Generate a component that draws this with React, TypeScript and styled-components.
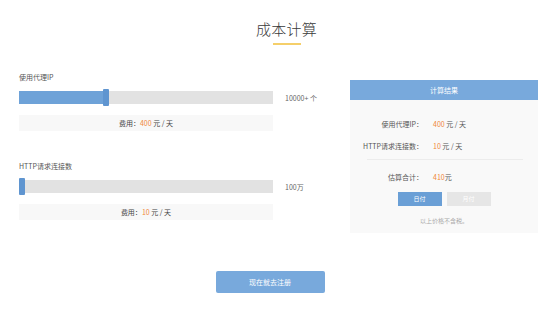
import { FC } from "react";
import styled, { createGlobalStyle } from "styled-components";

const GlobalStyle = createGlobalStyle`
  html, body {
    margin: 0;
    padding: 0;
    background: #ffffff;
    font-family: "Noto Sans CJK SC", "Liberation Sans", sans-serif;
    color: #666666;
  }
`;

const BLUE = "#78a9dc";
const ORANGE = "#f0883a";

interface SliderProps {
  label: string;
  percent: number;
  valueText: string;
  fee: string;
}

const SliderBlock: FC<SliderProps> = ({ label, percent, valueText, fee }) => (
  <Block>
    <Label>{label}</Label>
    <SliderRow>
      <Track>
        <Fill style={{ width: `${percent}%` }} />
        <Thumb style={{ left: `${percent}%` }} />
      </Track>
      <ValueText>{valueText}</ValueText>
    </SliderRow>
    <FeeBox>
      费用：<Orange>{fee}</Orange> 元 / 天
    </FeeBox>
  </Block>
);

export default function App() {
  return (
    <>
      <GlobalStyle />
      <Page>
        <TitleWrap>
          <Title>成本计算</Title>
          <Underline />
        </TitleWrap>
        <Content>
          <LeftCol>
            <SliderBlock
              label="使用代理IP"
              percent={33}
              valueText="10000+ 个"
              fee="400"
            />
            <SliderBlock
              label="HTTP请求连接数"
              percent={0}
              valueText="100万"
              fee="10"
            />
          </LeftCol>
          <Card>
            <CardHeader>计算结果</CardHeader>
            <CardBody>
              <ResultRow>
                <ResultLabel>使用代理IP：</ResultLabel>
                <ResultValue>
                  <Orange>400</Orange> 元 / 天
                </ResultValue>
              </ResultRow>
              <ResultRow>
                <ResultLabel>HTTP请求连接数：</ResultLabel>
                <ResultValue>
                  <Orange>10</Orange> 元 / 天
                </ResultValue>
              </ResultRow>
              <Divider />
              <ResultRow>
                <ResultLabel>估算合计：</ResultLabel>
                <ResultValue>
                  <Orange>410</Orange>元
                </ResultValue>
              </ResultRow>
              <Toggle>
                <ToggleButton active>日付</ToggleButton>
                <ToggleButton>月付</ToggleButton>
              </Toggle>
              <Note>以上价格不含税。</Note>
            </CardBody>
          </Card>
        </Content>
        <Footer>
          <RegisterButton>现在就去注册</RegisterButton>
        </Footer>
      </Page>
    </>
  );
}

const Page = styled.div`
  width: 554px;
  height: 312px;
  padding: 0 16px 0 19px;
  box-sizing: border-box;
`;

const TitleWrap = styled.div`
  display: flex;
  flex-direction: column;
  align-items: center;
  padding: 18px 0 0 16px;
  height: 72px;
  box-sizing: border-box;
`;

const Title = styled.div`
  font-size: 15px;
  font-weight: 300;
  line-height: 22px;
  color: #3a3a3a;
  letter-spacing: 0.3px;
`;

const Underline = styled.div`
  width: 28px;
  height: 2px;
  margin-top: 3px;
  background: #f5cf6a;
`;

const Content = styled.div`
  display: flex;
  justify-content: space-between;
`;

const LeftCol = styled.div`
  width: 300px;
  display: flex;
  flex-direction: column;
  gap: 30px;
`;

const Block = styled.div`
  display: flex;
  flex-direction: column;
`;

const Label = styled.div`
  font-size: 7px;
  line-height: 10px;
  color: #555555;
`;

const SliderRow = styled.div`
  display: flex;
  align-items: center;
  margin-top: 9px;
  height: 13px;
`;

const Track = styled.div`
  position: relative;
  width: 254px;
  height: 13px;
  background: #e2e2e2;
`;

const Fill = styled.div`
  height: 100%;
  background: #6ea2d8;
`;

const Thumb = styled.div`
  position: absolute;
  top: -2px;
  width: 6px;
  height: 17px;
  border-radius: 1px;
  background: #5f95d0;
`;

const ValueText = styled.div`
  margin-left: 12px;
  font-size: 7px;
  color: #666666;
  white-space: nowrap;
`;

const FeeBox = styled.div`
  width: 254px;
  height: 16px;
  margin-top: 11px;
  background: #f8f8f8;
  font-size: 7px;
  line-height: 16px;
  text-align: center;
  color: #444444;
`;

const Orange = styled.span`
  color: ${ORANGE};
`;

const Card = styled.div`
  width: 188px;
  margin-top: 8px;
  background: #f9f9f9;
  display: flex;
  flex-direction: column;
`;

const CardHeader = styled.div`
  height: 20px;
  line-height: 20px;
  background: ${BLUE};
  color: #ffffff;
  font-size: 7px;
  text-align: center;
`;

const CardBody = styled.div`
  display: flex;
  flex-direction: column;
  padding: 18px 0 7px;
`;

const ResultRow = styled.div`
  display: grid;
  grid-template-columns: 73px 1fr;
  column-gap: 10px;
  height: 12px;
  line-height: 12px;
  font-size: 7px;
  margin-bottom: 10px;
`;

const ResultLabel = styled.div`
  text-align: right;
  white-space: nowrap;
  color: #555555;
`;

const ResultValue = styled.div`
  color: #555555;
`;

const Divider = styled.div`
  height: 1px;
  margin: -3px 15px 11px 17px;
  background: #ececec;
`;

const Toggle = styled.div`
  display: flex;
  justify-content: center;
  gap: 5px;
  margin-top: -1px;
`;

const ToggleButton = styled.div<{ active?: boolean }>`
  width: 44px;
  height: 14px;
  line-height: 14px;
  font-size: 6px;
  text-align: center;
  color: #ffffff;
  background: ${({ active }) => (active ? "#6a9fd6" : "#e6e6e6")};
`;

const Note = styled.div`
  margin-top: 10px;
  text-align: center;
  font-size: 6px;
  line-height: 10px;
  color: #aaaaaa;
`;

const Footer = styled.div`
  display: flex;
  justify-content: center;
  padding: 38px 17px 0 0;
`;

const RegisterButton = styled.div`
  width: 109px;
  height: 22px;
  line-height: 22px;
  border-radius: 2px;
  background: ${BLUE};
  color: #ffffff;
  font-size: 7px;
  text-align: center;
`;
